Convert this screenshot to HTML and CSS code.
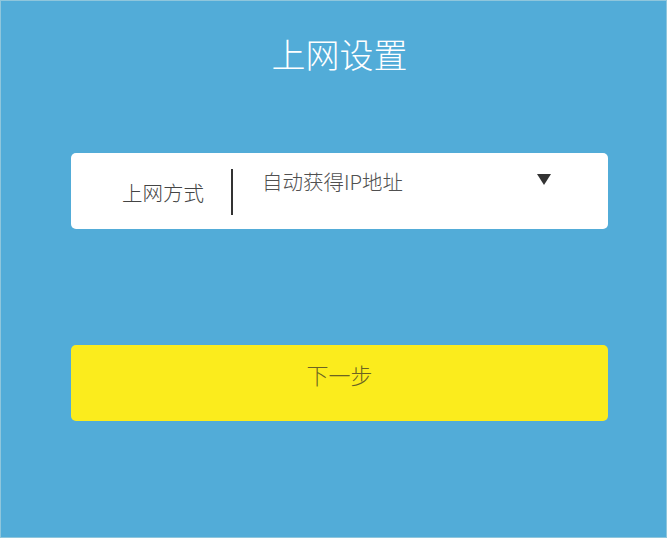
FILE: index.html
```html
<!DOCTYPE html>
<html lang="zh-CN">
<head>
<meta charset="utf-8">
<title>上网设置</title>
<link rel="stylesheet" href="styles.css">
</head>
<body>
<div class="page">
  <h1 class="title">上网设置</h1>
  <div class="card">
    <span class="label">上网方式</span>
    <span class="divider"></span>
    <div class="select">
      <span class="value">自动获得IP地址</span>
      <span class="arrow"></span>
    </div>
  </div>
  <button class="next">下一步</button>
</div>
</body>
</html>
```
FILE: styles.css
```css
html, body {
  margin: 0;
  padding: 0;
  height: 100%;
}
body {
  background: #52acd8;
  font-family: "Noto Sans CJK SC", "Noto Sans", sans-serif;
}
.page {
  box-sizing: border-box;
  height: 538px;
  border: 1px solid #8fc6dc;
  padding: 0 58px 0 70px;
  display: flex;
  flex-direction: column;
}
.title {
  margin: 31px 0 0 0;
  font-size: 34px;
  line-height: 44px;
  font-weight: 300;
  color: #ffffff;
  text-align: center;
}
.card {
  margin-top: 77px;
  height: 76px;
  background: #ffffff;
  border-radius: 5px;
  display: flex;
  align-items: center;
  padding-left: 51px;
  padding-right: 57px;
}
.label {
  font-size: 20.5px;
  line-height: 24px;
  font-weight: 300;
  color: #444444;
  width: 82px;
  white-space: nowrap;
  margin-top: 2px;
}
.divider {
  width: 2px;
  height: 46px;
  background: #333333;
  margin-left: 27px;
  margin-top: 1px;
}
.select {
  flex: 1;
  align-self: flex-start;
  margin-top: 16px;
  margin-left: 29px;
  display: flex;
  align-items: center;
  justify-content: space-between;
}
.value {
  font-size: 20.5px;
  line-height: 24px;
  font-weight: 300;
  color: #505050;
}
.arrow {
  width: 0;
  height: 0;
  border-left: 7px solid transparent;
  border-right: 7px solid transparent;
  border-top: 11px solid #333333;
  margin-top: -4px;
}
.next {
  margin-top: 116px;
  height: 76px;
  border: none;
  border-radius: 5px;
  background: #fbec1d;
  color: #6b6322;
  font-family: "Noto Sans CJK SC", "Noto Sans", sans-serif;
  font-size: 22px;
  font-weight: 300;
  line-height: 30px;
  padding: 14px 0 32px 0;
  text-align: center;
}
```
